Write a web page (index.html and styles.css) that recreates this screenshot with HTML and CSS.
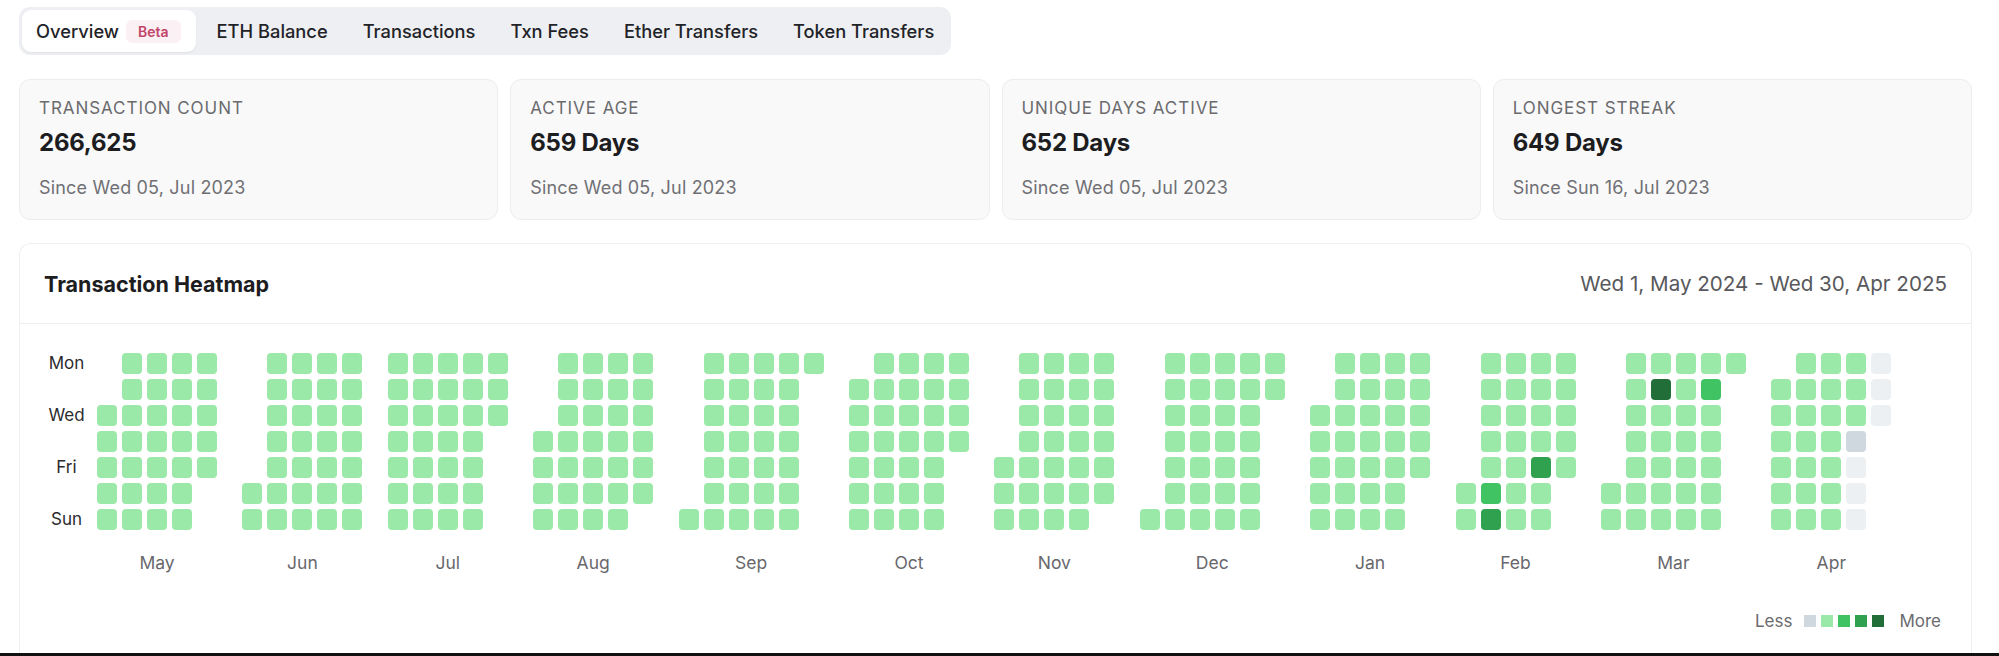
FILE: index.html
```html
<!DOCTYPE html>
<html lang="en">
<head>
	<meta charset="UTF-8">
	<title>Address Overview</title>
	<link rel="stylesheet" href="styles.css">
</head>
<body>
	<div class="page">
		<div class="tabs">
			<a href="javascript:;" class="tab on">Overview <span class="badge">Beta</span></a>
			<a href="javascript:;" class="tab">ETH Balance</a>
			<a href="javascript:;" class="tab">Transactions</a>
			<a href="javascript:;" class="tab">Txn Fees</a>
			<a href="javascript:;" class="tab">Ether Transfers</a>
			<a href="javascript:;" class="tab">Token Transfers</a>
		</div>

		<div class="stats">
			<div class="stat">
				<div class="stat-label">Transaction Count</div>
				<div class="stat-value">266,625</div>
				<div class="stat-since">Since Wed 05, Jul 2023</div>
			</div>
			<div class="stat">
				<div class="stat-label">Active Age</div>
				<div class="stat-value">659 Days</div>
				<div class="stat-since">Since Wed 05, Jul 2023</div>
			</div>
			<div class="stat">
				<div class="stat-label">Unique Days Active</div>
				<div class="stat-value">652 Days</div>
				<div class="stat-since">Since Wed 05, Jul 2023</div>
			</div>
			<div class="stat">
				<div class="stat-label">Longest Streak</div>
				<div class="stat-value">649 Days</div>
				<div class="stat-since">Since Sun 16, Jul 2023</div>
			</div>
		</div>

		<div class="heatmap">
			<div class="heatmap-head">
				<h2>Transaction Heatmap</h2>
				<span class="range">Wed 1, May 2024 - Wed 30, Apr 2025</span>
			</div>
			<div class="heatmap-body">
				<div class="calendar">
					<div class="days">
						<span>Mon</span><span></span><span>Wed</span><span></span><span>Fri</span><span></span><span>Sun</span>
					</div>
					<div id="months" class="months"></div>
				</div>
				<div class="legend">
					<span>Less</span>
					<i class="l0"></i><i class="l1"></i><i class="l2"></i><i class="l3"></i><i class="l4"></i>
					<span>More</span>
				</div>
			</div>
		</div>
	</div>
	<div class="edge"></div>

	<script type="text/javascript">
		// activity levels that differ from the usual light green
		var special = {
			'2025-02-08': 'l2', '2025-02-09': 'l3', '2025-02-21': 'l3',
			'2025-03-11': 'l4', '2025-03-25': 'l2', '2025-04-24': 'l0'
		};
		var names = ['Jan','Feb','Mar','Apr','May','Jun','Jul','Aug','Sep','Oct','Nov','Dec'];
		var holder = document.getElementById('months');

		function pad(n){ return n < 10 ? '0' + n : '' + n; }

		for (var m = 0; m < 12; m++) {
			var year = 2024 + Math.floor((4 + m) / 12);
			var month = (4 + m) % 12;
			var first = new Date(year, month, 1);
			var total = new Date(year, month + 1, 0).getDate();
			var offset = (first.getDay() + 6) % 7; // monday = 0

			var box = document.createElement('div');
			box.className = 'month';
			var grid = document.createElement('div');
			grid.className = 'grid';

			for (var b = 0; b < offset; b++) {
				var blank = document.createElement('i');
				blank.className = 'blank';
				grid.appendChild(blank);
			}
			for (var d = 1; d <= total; d++) {
				var key = year + '-' + pad(month + 1) + '-' + pad(d);
				var cell = document.createElement('i');
				if (special[key]) {
					cell.className = special[key];
				} else if (key > '2025-04-24') {
					cell.className = 'none';
				} else {
					cell.className = 'l1';
				}
				grid.appendChild(cell);
			}
			var label = document.createElement('div');
			label.className = 'month-name';
			label.innerHTML = names[month];

			box.appendChild(grid);
			box.appendChild(label);
			holder.appendChild(box);
		}
	</script>
</body>
</html>
```

FILE: styles.css
```css
* { margin: 0; padding: 0; box-sizing: border-box; text-decoration: none; }
body { font-family: Inter, "Noto Sans", sans-serif; color: #1f2328; background: #fff; }
.page { padding: 7px 27px 0 19px; }

/* tabs */
.tabs { display: inline-flex; gap: 7px; padding: 3px; background: #edeff2; border-radius: 11px; }
.tab { display: flex; align-items: center; height: 42px; padding: 0 14px; font-size: 18.3px; font-weight: 500; color: #1f2328; border-radius: 9px; }
.tab.on { padding-right: 15px; background: #fff; box-shadow: 0 1px 2px rgba(0,0,0,.06); }
.badge { margin-left: 7px; padding: 3px 12px; font-size: 14px; font-weight: 600; color: #c2456a; background: #fbf0f3; border-radius: 6px; }

/* stat cards */
.stats { display: grid; grid-template-columns: repeat(4, 1fr); gap: 12px; margin-top: 24px; }
.stat { height: 141px; padding: 18px 19px 0; background: #f9f9fa; border: 1px solid #ededef; border-radius: 11px; }
.stat-label { font-size: 17px; line-height: 20px; letter-spacing: .055em; text-transform: uppercase; color: #6b6b6e; }
.stat-value { margin-top: 10px; font-size: 24px; line-height: 30px; font-weight: 700; letter-spacing: -.01em; color: #1d1d1f; }
.stat-since { margin-top: 19px; font-size: 18px; line-height: 22px; letter-spacing: .01em; color: #707074; }

/* heatmap */
.heatmap { margin-top: 23px; border: 1px solid #eeeff1; border-bottom: 0; border-radius: 12px 12px 0 0; }
.heatmap-head { display: flex; align-items: center; justify-content: space-between; height: 80px; padding: 0 24px 0 24px; border-bottom: 1px solid #ebedf0; }
.heatmap-head h2 { font-size: 21.5px; font-weight: 700; color: #1d1d1f; }
.range { font-size: 20.6px; color: #58585c; }
.heatmap-body { padding: 29px 30px 40px 20px; }

.calendar { display: flex; }
.days { display: grid; grid-template-rows: repeat(7, 21px); row-gap: 5px; width: 53px; margin-right: 4px; }
.days span { font-size: 17px; line-height: 21px; text-align: center; color: #2b2b2e; }

.months { display: flex; gap: 25.4px; }
.month { display: flex; flex-direction: column; }
.grid { display: grid; grid-template-rows: repeat(7, 21px); grid-auto-columns: 20px; grid-auto-flow: column; gap: 5px; }
.grid i { display: block; border-radius: 4px; }
.grid i.blank { visibility: hidden; }
.month-name { margin-top: 22px; font-size: 17.5px; line-height: 22px; text-align: center; color: #68686c; }

.l0 { background: #cfd7df; }
.l1 { background: #9be9a8; }
.l2 { background: #40c463; }
.l3 { background: #30a14e; }
.l4 { background: #216e39; }
.none { background: #edf0f3; }

.legend { display: flex; align-items: center; justify-content: flex-end; gap: 5px; margin-top: 37px; font-size: 17px; color: #6b6b6e; }
.legend i { display: block; width: 12px; height: 12px; }
.legend span:first-child { margin-right: 7px; }
.legend span:last-child { margin-left: 10px; }

.edge { position: fixed; left: 0; right: 0; bottom: 0; height: 3px; background: #111; }
```
